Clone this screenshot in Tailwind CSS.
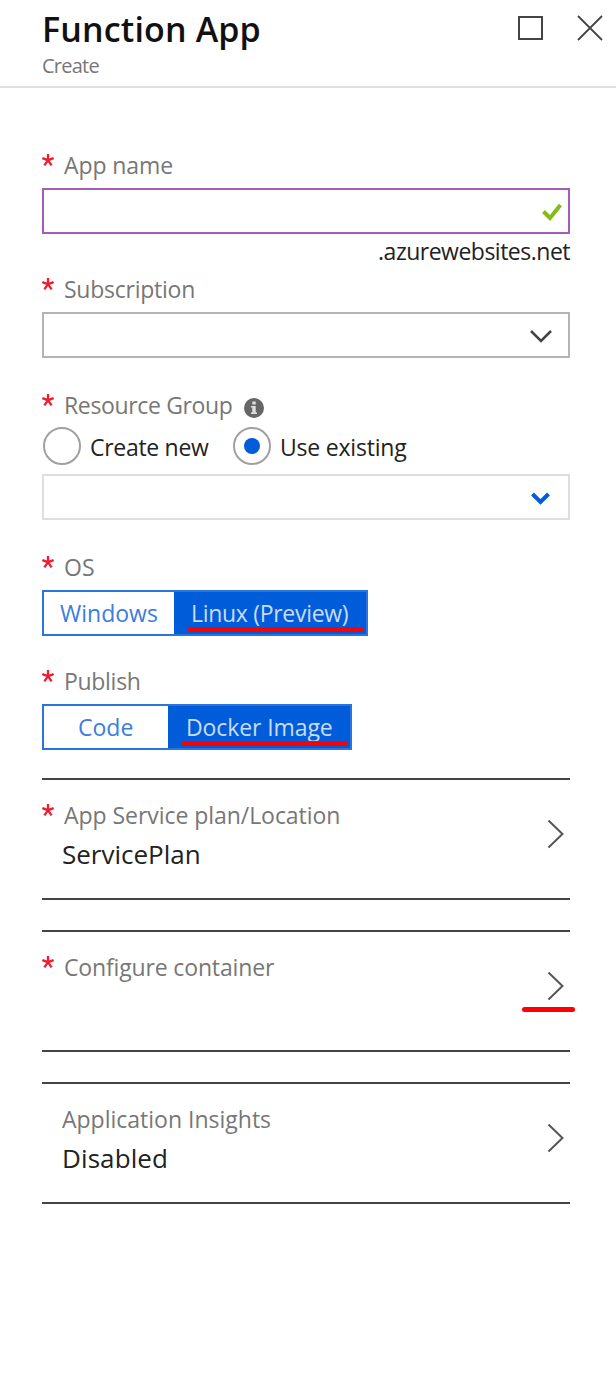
<!DOCTYPE html>
<html lang="en">
<head>
<meta charset="utf-8">
<title>Function App</title>
<script src="https://cdn.jsdelivr.net/npm/@tailwindcss/browser@4"></script>
</head>
<body class="bg-white">
<svg class="hidden"><symbol id="star" viewBox="0 0 12 12"><path d="M6 0V6.5M0.3 4.2L6 6.2L11.7 4.2M2.4 11.3L6 6.2L9.6 11.3" fill="none" stroke="#ee1c2e" stroke-width="2.3"/></symbol></svg>
<div class="flex h-[1386px] w-[616px] flex-col overflow-hidden bg-white font-['Open_Sans','Noto_Sans',sans-serif] text-[23px] leading-8 text-[#222]">
  <header class="flex h-[88px] shrink-0 items-start justify-between border-b-2 border-[#e0e0e0] pl-[42px] pr-[13px]">
    <div class="flex flex-col">
      <h1 class="mt-[9px] h-10 text-[34px] font-semibold leading-10 tracking-[0.15px] text-[#111]">Function App</h1>
      <p class="mt-[3px] h-7 text-[20px] leading-7 tracking-[-0.75px] text-[#777]">Create</p>
    </div>
    <div class="mt-[15px] flex gap-[34px] text-[#444]">
      <svg width="26" height="26" viewBox="0 0 26 26" fill="none" stroke="currentColor" stroke-width="2"><path d="M2 2H25V24H2Z"/></svg>
      <svg width="26" height="26" viewBox="0 0 26 26" fill="none" stroke="currentColor" stroke-width="1.8"><path d="M1 1L25 25M25 1L1 25"/></svg>
    </div>
  </header>

  <main class="flex w-[570px] flex-col pl-[42px] pt-[61px]">
    <section class="flex flex-col">
      <div class="flex h-8"><svg class="mt-[5px] mr-[10px] size-3 shrink-0"><use href="#star"/></svg><label class="tracking-[-0.1px] text-[#777]">App name</label></div>
      <div class="mt-[7px] flex h-[46px] items-center justify-end border-2 border-[#a55cb9] pr-[6px]">
        <svg class="mt-px" width="20" height="18" viewBox="0 0 20 18" fill="none" stroke="#84bd14" stroke-width="4"><path d="M1.5 8.5L8 15L18.5 2"/></svg>
      </div>
      <div class="mt-px h-8 text-right tracking-[-0.5px]">.azurewebsites.net</div>
    </section>

    <section class="mt-[6px] flex flex-col">
      <div class="flex h-8"><svg class="mt-[5px] mr-[10px] size-3 shrink-0"><use href="#star"/></svg><label class="tracking-[-0.25px] text-[#777]">Subscription</label></div>
      <div class="mt-[7px] flex h-[46px] items-center justify-end border-2 border-[#b4b4b4] pr-4">
        <svg class="mt-[2px]" width="22" height="14" viewBox="0 0 22 14" fill="none" stroke="#444" stroke-width="2.5"><path d="M1 2L11 12L21 2"/></svg>
      </div>
    </section>

    <section class="mt-[31px] flex flex-col">
      <div class="flex h-8"><svg class="mt-[5px] mr-[10px] size-3 shrink-0"><use href="#star"/></svg><label class="w-[180px] whitespace-nowrap tracking-[-0.35px] text-[#777]">Resource Group</label>
        <svg class="mt-[9px]" width="20" height="20" viewBox="0 0 20 20"><circle cx="10" cy="10" r="10" fill="#666"/><path d="M8.3 3.6H11.7V6.4H8.3ZM7 8H11.7V14.4H13V16H7V14.4H8.3V9.6H7Z" fill="#ddd"/></svg>
      </div>
      <div class="mt-[6px] flex h-[38px] items-center pl-[1px]">
        <span class="size-[38px] shrink-0 rounded-full border-2 border-[#a0a0a0]"></span>
        <span class="ml-[9px] mt-0.5 w-[143px] whitespace-nowrap tracking-[-0.3px]">Create new</span>
        <span class="flex size-[38px] shrink-0 items-center justify-center rounded-full border-2 border-[#a0a0a0]"><span class="size-4 rounded-full bg-[#015cda]"></span></span>
        <span class="ml-[9px] mt-0.5 whitespace-nowrap tracking-[-0.2px]">Use existing</span>
      </div>
      <div class="mt-[9px] flex h-[46px] items-center justify-end border-2 border-[#dedede] pr-[18px]">
        <svg class="mt-[2px]" width="19" height="13" viewBox="0 0 19 13" fill="none" stroke="#015cda" stroke-width="4"><path d="M1.5 2L9.5 10L17.5 2"/></svg>
      </div>
    </section>

    <section class="mt-[31px] flex flex-col">
      <div class="flex h-8"><svg class="mt-[5px] mr-[10px] size-3 shrink-0"><use href="#star"/></svg><label class="text-[#777]">OS</label></div>
      <div class="mt-[7px] flex h-[46px] w-[326px] border-2 border-[#2b74de]">
        <span class="w-[130px] pl-4 pt-[5px] text-[#3a7de0]">Windows</span>
        <span class="relative flex-1 whitespace-nowrap bg-[#015cda] pl-[17px] pt-[5px] tracking-[-0.3px] text-[#c8dcf7]">Linux (Preview)<i class="absolute left-[13px] top-[35px] h-[5px] w-[177px] rounded-full bg-[#f00]"></i></span>
      </div>
    </section>

    <section class="mt-[29px] flex flex-col">
      <div class="flex h-8"><svg class="mt-[5px] mr-[10px] size-3 shrink-0"><use href="#star"/></svg><label class="tracking-[-0.3px] text-[#777]">Publish</label></div>
      <div class="mt-[7px] flex h-[46px] w-[310px] border-2 border-[#2b74de]">
        <span class="w-[124px] pl-[34px] pt-[5px] text-[#3a7de0]">Code</span>
        <span class="relative flex-1 whitespace-nowrap bg-[#015cda] pl-[18px] pt-[5px] tracking-[-0.1px] text-[#c8dcf7]">Docker Image<i class="absolute left-[13px] top-[35px] h-[5px] w-[167px] rounded-full bg-[#f00]"></i></span>
      </div>
    </section>

    <section class="mt-[28px] flex h-[122px] justify-between border-y-2 border-[#444] pt-[19px]">
      <div>
        <div class="flex h-8"><svg class="mt-[5px] mr-[10px] size-3 shrink-0"><use href="#star"/></svg><span class="tracking-[-0.05px] text-[#777]">App Service plan/Location</span></div>
        <div class="mt-[7px] pl-5 text-[26px]">ServicePlan</div>
      </div>
      <svg class="mr-[6px] mt-5" width="17" height="30" viewBox="0 0 17 30" fill="none" stroke="#555" stroke-width="2"><path d="M1.5 1.5L15.5 15L1.5 28.5"/></svg>
    </section>

    <section class="mt-[30px] flex h-[122px] justify-between border-y-2 border-[#444] pt-[19px]">
      <div class="flex h-8"><svg class="mt-[5px] mr-[10px] size-3 shrink-0"><use href="#star"/></svg><span class="tracking-[-0.15px] text-[#777]">Configure container</span></div>
      <div class="relative mr-[6px] mt-5">
        <svg width="17" height="30" viewBox="0 0 17 30" fill="none" stroke="#555" stroke-width="2"><path d="M1.5 1.5L15.5 15L1.5 28.5"/></svg>
        <i class="absolute left-[-25px] top-[36px] h-[5px] w-[53px] rounded-full bg-[#f00]"></i>
      </div>
    </section>

    <section class="mt-[30px] flex h-[122px] justify-between border-y-2 border-[#444] pt-[19px]">
      <div class="pl-5">
        <div class="h-8 text-[#777]">Application Insights</div>
        <div class="mt-[7px] text-[26px] tracking-[0.1px]">Disabled</div>
      </div>
      <svg class="mr-[6px] mt-5" width="17" height="30" viewBox="0 0 17 30" fill="none" stroke="#555" stroke-width="2"><path d="M1.5 1.5L15.5 15L1.5 28.5"/></svg>
    </section>
  </main>
</div>
</body>
</html>
